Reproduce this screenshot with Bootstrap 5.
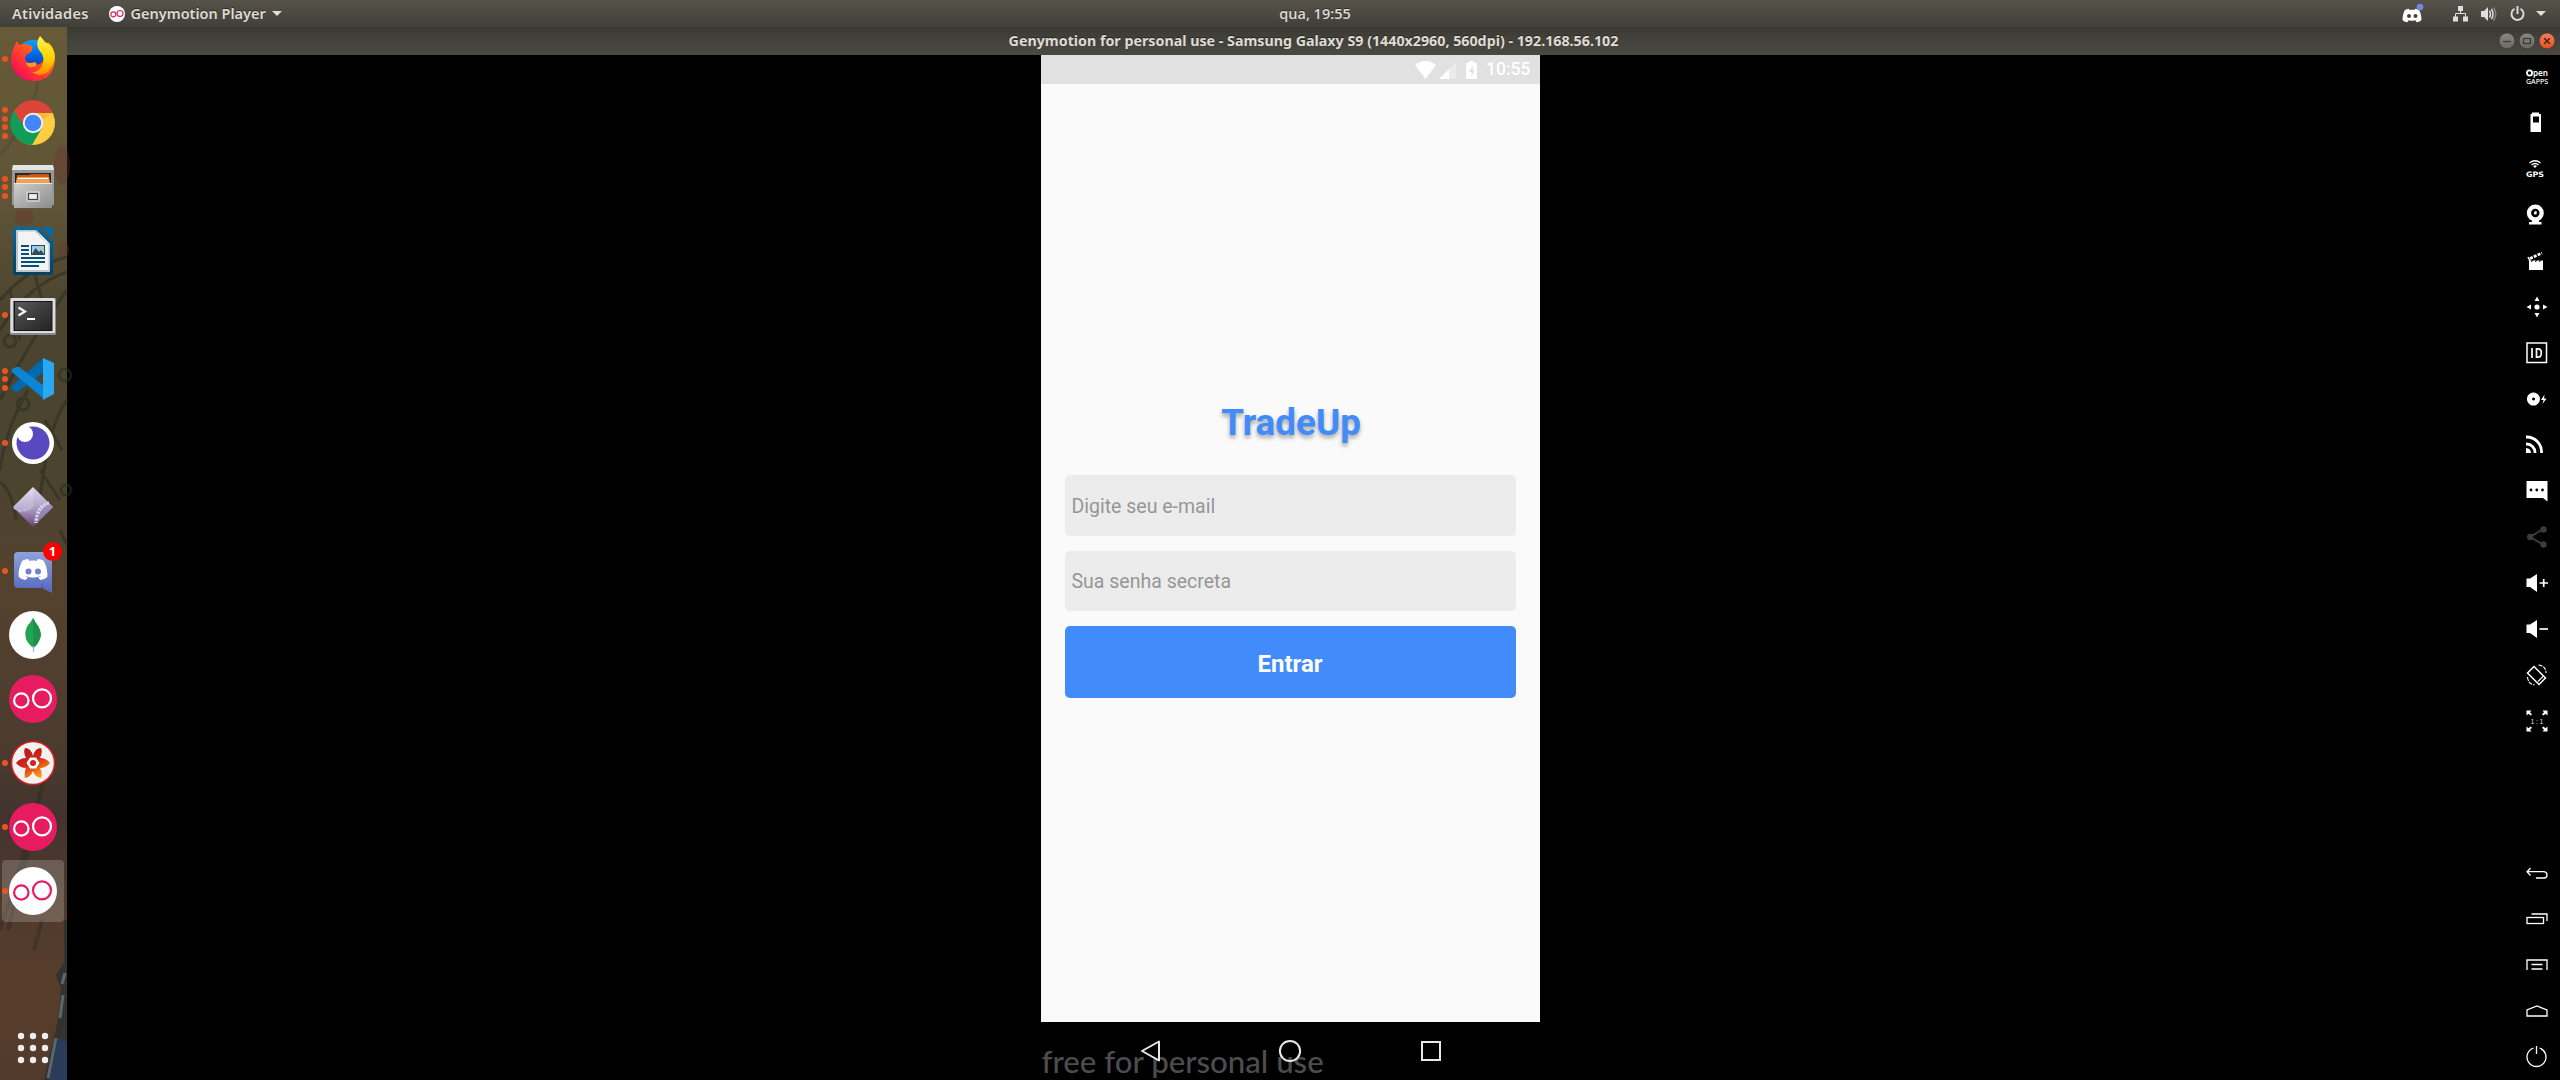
<!DOCTYPE html>
<html lang="pt-BR">
<head>
<meta charset="utf-8">
<meta name="viewport" content="width=device-width, initial-scale=1">
<title>Genymotion Player</title>
<link href="https://cdn.jsdelivr.net/npm/bootstrap@5.3.0/dist/css/bootstrap.min.css" rel="stylesheet">
<style>
html,body{height:100%}
body{background:#000;overflow:hidden;font-family:"Noto Sans",sans-serif}
svg{display:block;flex:none;overflow:visible}
.topbar{height:27px;background:linear-gradient(#57534a,#403f3a);color:#dfdbd2;font-size:14.5px;font-weight:600;line-height:27px;display:grid;grid-template-columns:1fr auto 1fr}
.topbar,.titlebar{text-shadow:0 -1px 0 rgba(0,0,0,.45)}
.activities{padding-left:12px;letter-spacing:.25px}
.appmenu{margin-left:20px;gap:6px}
.clock{padding-left:70px;font-family:"Open Sans",sans-serif}
.tray{padding-right:14px}
.tray .t-chat{margin-right:30px}
.tray .t-net,.tray .t-vol{margin-right:13px}
.tray .t-pow{margin-right:11px}
.titlebar{height:28px;background:linear-gradient(#3b3a35,#4b4943);color:#dfdbd2;font-size:14.25px;font-weight:700;line-height:28px;display:grid;grid-template-columns:68px 1fr 68px}
.winbtns{padding-right:5px}
.dock{width:67px;background:linear-gradient(#665a37 0%,#5f5436 17%,#4b442e 27%,#4b442f 43%,#54412e 54%,#4c3b2f 68%,#42342d 75%,#513b2d 84%,#573d2b 92%,#523b2c 100%);z-index:0}
.wallpaper{position:absolute;inset:0;z-index:-1}
.slot{height:64px;position:relative}
.slot.current::before{content:"";position:absolute;left:2px;top:1px;width:62px;height:62px;border-radius:4px;background:rgba(255,255,255,.19)}
.slot svg{position:relative}
.dots{position:absolute;left:2px;top:0;height:64px;width:6px;gap:2.5px;z-index:1}
.dots i{width:6px;height:6px;border-radius:50%;background:#e95420;flex:none}
.notif{position:absolute;left:43px;top:3px;width:19px;height:19px;border-radius:50%;background:#f00;color:#fff;font:700 13px/19px "Noto Sans",sans-serif;text-align:center}
.apps{height:64px}
.phone{width:499px;font-family:Roboto,sans-serif}
.statusbar{height:29px;background:#e1e1e1;color:#fff;font-size:17.5px;font-weight:500;padding-right:9px}
.s-wifi{margin-right:3px}
.s-cell{margin-right:10px}
.s-batt{margin-right:9px}
.app{background:#fafafa;padding:315px 24px 0}
.brand-name{font-size:36.8px;font-weight:700;line-height:44px;color:#428bfa;text-shadow:0 3px 4px rgba(0,0,0,.35);margin-bottom:30px;padding:2px 0 0 2px}
.field{height:60.500px;border:0;border-radius:5px;background:#ececec;padding:2px 7px 0;font-size:19.5px;color:#333;margin-bottom:15px}
.field::placeholder{color:#969696;opacity:1}
.field:focus{background:#ececec}
.enter{height:72px;border:0;border-radius:5px;background:#428bfa;font-size:24px;font-weight:700;padding:3px 0 0}
.navbuttons{height:58px;position:relative}
.watermark{position:absolute;left:1px;top:19px;font:500 31.2px/40px Lato,sans-serif;color:#4d4d4d;white-space:nowrap}
.navrow{position:relative;padding:18px 99px 0 98px}
.tools{width:47px;margin-top:-1px}
.tool{height:46px;color:#fff}
.tool svg{width:22px;height:22px}
</style>
</head>
<body class="d-flex flex-column">
<svg width="0" height="0" class="position-absolute">
<defs>
<linearGradient id="fxr" x1="0" y1="1" x2="1" y2="0"><stop offset="0" stop-color="#b5007f"/><stop offset=".25" stop-color="#ff1e45"/><stop offset=".6" stop-color="#ff5a1f"/><stop offset="1" stop-color="#ffc400"/></linearGradient>
<linearGradient id="fxy" x1="0" y1="0" x2="0" y2="1"><stop offset="0" stop-color="#fff44a"/><stop offset=".6" stop-color="#ffd000"/><stop offset="1" stop-color="#ff8a00"/></linearGradient>
<linearGradient id="fxb" x1="0" y1="0" x2="0" y2="1"><stop offset="0" stop-color="#0aa0ff"/><stop offset=".5" stop-color="#0060df"/><stop offset="1" stop-color="#45107a"/></linearGradient>
<linearGradient id="metal" x1="0" y1="0" x2="1" y2="1"><stop offset="0" stop-color="#cfcfcf"/><stop offset="1" stop-color="#8c8c8c"/></linearGradient>
<linearGradient id="term" x1="0" y1="0" x2="1" y2="1"><stop offset="0" stop-color="#5a5a5a"/><stop offset=".5" stop-color="#3c3c3c"/><stop offset="1" stop-color="#242424"/></linearGradient>
<linearGradient id="dia" x1="0" y1="0" x2="0" y2="1"><stop offset="0" stop-color="#dcd9ee"/><stop offset=".55" stop-color="#a99cc4"/><stop offset="1" stop-color="#6a3d78"/></linearGradient>
<linearGradient id="disc" x1="0" y1="0" x2="0" y2="1"><stop offset="0" stop-color="#8fa2dc"/><stop offset="1" stop-color="#5468bd"/></linearGradient>
<linearGradient id="doc" x1="0" y1="0" x2="0" y2="1"><stop offset="0" stop-color="#0369a3"/><stop offset="1" stop-color="#064066"/></linearGradient>
<linearGradient id="star" x1="0" y1="0" x2=".6" y2="1"><stop offset="0" stop-color="#a81217"/><stop offset=".55" stop-color="#d02a1e"/><stop offset="1" stop-color="#ff9a12"/></linearGradient>
<linearGradient id="wbtn" x1="0" y1="0" x2="0" y2="1"><stop offset="0" stop-color="#8a8880"/><stop offset="1" stop-color="#6a6862"/></linearGradient>
<linearGradient id="wcls" x1="0" y1="0" x2="0" y2="1"><stop offset="0" stop-color="#f58060"/><stop offset="1" stop-color="#e2501e"/></linearGradient>
<symbol id="clyde" viewBox="0 0 28 22"><path fill="currentColor" d="M9.500 1C7 1.200 4.800 2 3.500 3C1 7.500 0 13 .2 17.600C2 19.600 4.500 20.600 7.200 21L9 18.500C7.800 18.100 6.800 17.700 6 17C11 19.300 17 19.300 22 17C21.200 17.700 20.200 18.100 19 18.500L20.800 21C23.500 20.600 26 19.600 27.800 17.600C28 13 27 7.500 24.500 3C23.200 2 21 1.200 18.500 1L17.600 2.800C15 2.400 13 2.400 10.400 2.800Z"/></symbol>
</defs>
</svg>

<header class="topbar">
  <div class="d-flex align-items-center"><span class="activities">Atividades</span>
    <span class="appmenu d-flex align-items-center"><svg width="16" height="16" viewBox="0 0 48 48"><circle cx="24" cy="24" r="24" fill="#fff"/><g fill="none" stroke="#e61b60" stroke-width="3.500"><circle cx="13" cy="25" r="7.500"/><circle cx="33" cy="22.500" r="9"/></g></svg><span>Genymotion Player</span><svg width="10" height="5" viewBox="0 0 10 5"><path d="M0 0H10L5 5Z" fill="#ddd"/></svg></span></div>
  <div class="clock">qua, 19:55</div>
  <div class="tray d-flex justify-content-end align-items-center">
    <svg class="t-chat" width="21" height="20" viewBox="0 0 21 20"><svg x="0" y="4" width="20" height="15" color="#fff"><use href="#clyde"/></svg><circle cx="7" cy="12" r="2" fill="#45433e"/><circle cx="13.500" cy="12" r="2" fill="#45433e"/><circle cx="18" cy="3" r="3.300" fill="#7289da"/></svg>
    <svg class="t-net" width="15" height="16" viewBox="0 0 15 16"><path fill="#dedede" d="M5 0H10V5H5ZM0 10.500H5V15.500H0ZM10 10.500H15V15.500H10Z"/><path d="M7.500 5V8M2.500 11V7.500H12.500V11" fill="none" stroke="#dedede"/></svg>
    <svg class="t-vol" width="16" height="16" viewBox="0 0 16 16"><path d="M0 5H3L7 1V15L3 11H0Z" fill="#dedede"/><path d="M8.500 4.500Q10.500 8 8.500 11.500M10.500 3Q13.500 8 10.500 13" fill="none" stroke="#dedede" stroke-width="1.500"/><path d="M12.500 1.500Q17 8 12.500 14.500" fill="none" stroke="#85827a" stroke-width="1.500"/></svg>
    <svg class="t-pow" width="15" height="16" viewBox="0 0 15 16"><path d="M4.500 2.800A6 6 0 1 0 10.500 2.800M7.500 0V8" fill="none" stroke="#dedede" stroke-width="1.900"/></svg>
    <svg width="10" height="5" viewBox="0 0 10 5"><path d="M0 0H10L5 5Z" fill="#ddd"/></svg>
  </div>
</header>

<div class="d-flex flex-grow-1">
<nav class="dock position-relative d-flex flex-column">
  <svg class="wallpaper" width="67" height="1053" viewBox="0 27 67 1053">
    <g fill="#6d3034" opacity=".35"><ellipse cx="62" cy="165" rx="8" ry="20"/><ellipse cx="24" cy="217" rx="10" ry="8"/><ellipse cx="64" cy="250" rx="5" ry="8"/></g>
    <g fill="none" stroke="#2a2e24" stroke-width="3" opacity=".55"><path d="M38 80Q34 110 12 140L0 155" opacity=".3"/><path d="M67 257Q30 266 0 300"/><path d="M67 272Q28 285 0 330"/><path d="M10 290L20 340M35 275L50 330M67 290Q30 340 0 400"/><circle cx="10" cy="341" r="6"/><circle cx="23" cy="404" r="6"/><circle cx="65" cy="375" r="6"/><path d="M67 400Q45 430 38 520M28 390Q5 430 0 470M45 420L62 450M40 470L60 500"/><circle cx="66" cy="490" r="5"/><path d="M0 482Q12 490 16 520"/><path d="M60 530L67 545"/></g>
    <path d="M44 778Q30 840 0 930M28 850L8 930M42 920L34 950" fill="none" stroke="#27211f" stroke-width="4" opacity=".35"/>
    <path d="M67 920H64V962L56 975L61 988L58 1020L44 1080H67Z" fill="#29302f" opacity=".8"/>
    <path d="M67 1042L58 1038L49 1080H67Z" fill="#2b3c5a"/>
    <path d="M65 973L62 984M63 995L60 1018M56 1038L48 1078" fill="none" stroke="#59686a" stroke-width="3"/>
  </svg>
  <div class="slot"><div class="dots d-flex flex-column justify-content-center"><i></i></div>
    <svg width="66" height="64" viewBox="0 0 66 64"><circle cx="33" cy="30" r="17" fill="url(#fxb)"/><path d="M17 14L19 18Q25 16 29 18L33 20L31 25L26 28L25 32Q27 40 36 38Q41 37 43 34Q47 29 45 24L48 15Q56 22 55 33Q53 54 33 54Q12 53 11 32Q12 22 17 14Z" fill="url(#fxr)"/><path d="M40 9Q35 16 39 23Q46 30 42 39Q38 46 32 45Q39 51 48 45Q57 34 54 25Q51 17 45 15Q43 12 40 9Z" fill="url(#fxy)"/><path d="M26 35Q30 37 35 35L37 37Q35 41 29 40Q26 38 26 35Z" fill="#ff9a1f"/></svg></div>
  <div class="slot"><div class="dots d-flex flex-column justify-content-center"><i></i><i></i><i></i><i></i></div>
    <svg width="66" height="64" viewBox="0 0 66 64"><circle cx="33" cy="32" r="22" fill="#ffcd40"/><path d="M33 32L23 42 14 20A22 22 0 0 1 53 22H33Z" fill="#db4437"/><path d="M14 20L25 37 33 42 42 37 32 54A22 22 0 0 1 14 20Z" fill="#0f9d58"/><path d="M33 22H52.500L42 29Z" fill="#e3a82d" opacity=".5"/><circle cx="33" cy="32" r="10.200" fill="#f1f1f1"/><circle cx="33" cy="32" r="8.300" fill="#4285f4"/></svg></div>
  <div class="slot"><div class="dots d-flex flex-column justify-content-center"><i></i><i></i><i></i></div>
    <svg width="66" height="64" viewBox="0 0 66 64"><path d="M13 10H53L54 15V50H12V15Z" fill="#989898"/><path d="M13 10H53L54 15H12Z" fill="#e3e3e3"/><path d="M15 18H51V28H15Z" fill="#262626"/><path d="M17 20H29L31 19H49V28H16Z" fill="#cb571b"/><path d="M17 22H49L50 28H16Z" fill="#f0a055"/><path d="M18 23.500H48" stroke="#fff"/><path d="M14 28H52V53H14Z" fill="url(#metal)"/><path d="M14 28.500H52" stroke="#e8e8e8"/><rect x="26" y="36" width="14" height="11" rx="2" fill="#ccc"/><rect x="28.500" y="38.500" width="9" height="6" fill="#eee" stroke="#444" stroke-width="1.200"/></svg></div>
  <div class="slot">
    <svg width="66" height="64" viewBox="0 0 66 64"><path d="M15 8H38L53 23V54Q53 56 51 56H15Q13 56 13 54V10Q13 8 15 8Z" fill="url(#doc)"/><path d="M41 8H53V20Z" fill="#0768a5"/><path d="M16 11H36L50 25V53H16Z" fill="#bfc6ca"/><path d="M18 12.500H35L48.500 26V51H18Z" fill="#f3f3f3"/><path d="M36 11L50 25 46 23Z" fill="#fff"/><path d="M21 27H29M21 31H29M21 35H29M21 39H45M21 43H45M21 47H39" stroke="#075078" stroke-width="2"/><rect x="31.500" y="26.500" width="13" height="9" fill="#96cef5" stroke="#075078"/><path d="M32 35L35.500 29 39 33 41 31 44 35Z" fill="#444"/><circle cx="42" cy="28.500" r="1.500" fill="#ebc33b"/></svg></div>
  <div class="slot"><div class="dots d-flex flex-column justify-content-center"><i></i></div>
    <svg width="66" height="64" viewBox="0 0 66 64"><rect x="10" y="15" width="46" height="37" rx="1.500" fill="#8b898e"/><rect x="10.500" y="15" width="44.500" height="35" rx="1" fill="#dedbe0"/><rect x="13.500" y="18" width="39" height="30" fill="#151515"/><rect x="15" y="19" width="36.500" height="28" fill="url(#term)"/><path d="M18.500 24.500L25 28.500 18.500 32.500" fill="none" stroke="#f4f4f4" stroke-width="2.200"/><path d="M27 36H35" stroke="#fff" stroke-width="2"/></svg></div>
  <div class="slot"><div class="dots d-flex flex-column justify-content-center"><i></i><i></i><i></i></div>
    <svg width="66" height="64" viewBox="0 0 66 64"><path d="M43 11L12 39V42L16 45 19 44 44 25Z" fill="#0069b0"/><path d="M44 52L12 25V22L16 20 19 20 44 39Z" fill="#0a86d4"/><path d="M43 11L54 16V47L43 53Z" fill="#28a9f2"/></svg></div>
  <div class="slot"><div class="dots d-flex flex-column justify-content-center"><i></i></div>
    <svg width="66" height="64" viewBox="0 0 66 64"><circle cx="33" cy="32" r="21" fill="#fff"/><circle cx="33" cy="32" r="16.500" fill="#5849be"/><circle cx="25" cy="23" r="8" fill="#fff"/></svg></div>
  <div class="slot">
    <svg width="66" height="64" viewBox="0 0 66 64"><path d="M33 12L53 32 33 52 13 32Z" fill="url(#dia)"/><path d="M33 12V32L28 36 20 37 13 32Z" fill="#fff" opacity=".18"/><path d="M49 28Q37 31 36 48" fill="none" stroke="#d9d2ea" stroke-width="3.500" stroke-dasharray="2.500 1"/><path d="M50 29Q40 32 38 47L53 32Z" fill="#9485b8" opacity=".7"/><path d="M14 33L20 36 27 35 32 31 34 24 38 18" fill="none" stroke="#c5bddb" stroke-width="1.500" stroke-dasharray="3 2"/></svg></div>
  <div class="slot"><div class="dots d-flex flex-column justify-content-center"><i></i></div>
    <svg width="66" height="64" viewBox="0 0 66 64"><path d="M18 13H48Q52 13 52 17V54L42 49H18Q14 49 14 45V17Q14 13 18 13Z" fill="url(#disc)"/><path d="M42 45L43 49" stroke="#4053a8"/><svg x="18" y="19" width="30" height="23" color="#fff"><use href="#clyde"/></svg><circle cx="28.500" cy="32.500" r="3" fill="#6e82ca"/><circle cx="38" cy="32.500" r="3" fill="#6e82ca"/></svg><span class="notif">1</span></div>
  <div class="slot">
    <svg width="66" height="64" viewBox="0 0 66 64"><circle cx="33" cy="32" r="24" fill="#fff"/><path d="M33 15Q35 19 38 23Q43 31 39 38Q37 42 33.500 45Q28 41 26 36Q24 28 28 22Q31 19 33 15Z" fill="#23a455"/><path d="M33 15Q35 19 38 23Q43 31 39 38Q37 42 33.500 45Z" fill="#1c9148"/><path d="M33.500 43V49" stroke="#aab3b8" stroke-width="1.300"/></svg></div>
  <div class="slot">
    <svg width="66" height="64" viewBox="0 0 66 64"><circle cx="33" cy="32" r="24" fill="#e61b60"/><g fill="none" stroke="#fff" stroke-width="2.200"><circle cx="21.300" cy="33.500" r="7.200"/><circle cx="42" cy="31.300" r="9"/></g></svg></div>
  <div class="slot"><div class="dots d-flex flex-column justify-content-center"><i></i></div>
    <svg width="66" height="64" viewBox="0 0 66 64"><circle cx="33" cy="32" r="21.500" fill="#f2f2f2" stroke="#e01a1a" stroke-width="1.500"/><path d="M33 25Q31 17 25 17Q23 21 26 27Q20 27 16 32Q20 37 26 37Q24 42 25 47Q31 46 33 40Q35 46 41 47Q43 43 40 37Q46 37 50 32Q46 27 40 27Q43 21 41 17Q35 17 33 25Z" fill="url(#star)"/><path d="M30 26.500H36L39.500 32 36 37.500H30L26.500 32Z" fill="#fff"/><circle cx="33" cy="32" r="3" fill="#d42020"/></svg></div>
  <div class="slot"><div class="dots d-flex flex-column justify-content-center"><i></i></div>
    <svg width="66" height="64" viewBox="0 0 66 64"><circle cx="33" cy="32" r="24" fill="#e61b60"/><g fill="none" stroke="#fff" stroke-width="2.200"><circle cx="21.300" cy="33.500" r="7.200"/><circle cx="42" cy="31.300" r="9"/></g></svg></div>
  <div class="slot current"><div class="dots d-flex flex-column justify-content-center"><i></i></div>
    <svg width="66" height="64" viewBox="0 0 66 64"><circle cx="33" cy="32" r="24" fill="#fff"/><g fill="none" stroke="#e61b60" stroke-width="2.200"><circle cx="21.300" cy="33.500" r="7.200"/><circle cx="42" cy="31.300" r="9"/></g></svg></div>
  <div class="apps mt-auto"><svg width="66" height="64" viewBox="0 0 66 64"><g fill="#eee"><circle cx="21" cy="20" r="3.200"/><circle cx="33" cy="20" r="3.200"/><circle cx="45" cy="20" r="3.200"/><circle cx="21" cy="32" r="3.200"/><circle cx="33" cy="32" r="3.200"/><circle cx="45" cy="32" r="3.200"/><circle cx="21" cy="44" r="3.200"/><circle cx="33" cy="44" r="3.200"/><circle cx="45" cy="44" r="3.200"/></g></svg></div>
</nav>

<main class="flex-grow-1 d-flex flex-column">
  <div class="titlebar">
    <span></span>
    <div class="text-center">Genymotion for personal use - Samsung Galaxy S9 (1440x2960, 560dpi) - 192.168.56.102</div>
    <div class="winbtns d-flex align-items-center justify-content-end gap-1">
      <svg width="16" height="16" viewBox="0 0 16 16"><circle cx="8" cy="8" r="7.900" fill="url(#wbtn)" stroke="#33322e" stroke-width=".6"/><path d="M4 8.500H12" stroke="#3a3934" stroke-width="1.200"/></svg>
      <svg width="16" height="16" viewBox="0 0 16 16"><circle cx="8" cy="8" r="7.900" fill="url(#wbtn)" stroke="#33322e" stroke-width=".6"/><rect x="4.500" y="5.500" width="7" height="5" fill="none" stroke="#3a3934" stroke-width="1.200"/></svg>
      <svg width="16" height="16" viewBox="0 0 16 16"><circle cx="8" cy="8" r="7.900" fill="url(#wcls)" stroke="#33322e" stroke-width=".6"/><path d="M5.200 5.200L10.800 10.800M10.800 5.200L5.200 10.800" stroke="#45200e" stroke-width="1.400"/></svg>
    </div>
  </div>
  <div class="d-flex flex-grow-1">
    <div class="flex-grow-1 d-flex justify-content-center">
      <section class="phone d-flex flex-column">
        <div class="statusbar d-flex justify-content-end align-items-center">
          <svg class="s-wifi" width="21" height="18" viewBox="0 0 21 18"><path d="M0 4Q10.500-4 21 4L10.500 18Z" fill="#fff"/></svg>
          <svg class="s-cell" width="17" height="18" viewBox="0 0 17 18"><path d="M17 1V18H0Z" fill="#ececec"/><path d="M10 8V18H0Z" fill="#fff"/></svg>
          <svg class="s-batt" width="11" height="18" viewBox="0 0 11 18"><path d="M3 0H8V2H11V18H0V2H3Z" fill="#fff"/><path d="M7 4L3 11H5.500V16L8.500 9H6.500Z" fill="#e1e1e1"/></svg>
          <span>10:55</span>
        </div>
        <form class="app flex-grow-1" onsubmit="return false">
          <h1 class="brand-name text-center">TradeUp</h1>
          <input class="field form-control shadow-none" type="email" placeholder="Digite seu e-mail">
          <input class="field form-control shadow-none" type="password" placeholder="Sua senha secreta">
          <button class="enter btn btn-primary w-100" type="submit">Entrar</button>
        </form>
        <div class="navbuttons">
          <span class="watermark">free for personal use</span>
          <div class="navrow d-flex justify-content-between">
            <svg width="22" height="22" viewBox="0 0 22 22"><path d="M20 1.500V20.500L3 11Z" fill="none" stroke="#e8e8e8" stroke-width="2" stroke-linejoin="round"/></svg>
            <svg width="23" height="22" viewBox="0 0 23 22"><circle cx="11" cy="11" r="10.100" fill="none" stroke="#e8e8e8" stroke-width="2"/></svg>
            <svg width="20" height="22" viewBox="0 0 20 22"><rect x="1" y="2" width="18" height="18" fill="none" stroke="#e8e8e8" stroke-width="2"/></svg>
          </div>
        </div>
      </section>
    </div>
    <aside class="tools d-flex flex-column">
      <div class="tool d-flex align-items-center justify-content-center"><svg viewBox="0 0 22 22" fill="#fff" font-family="Noto Sans" font-weight="600"><circle cx="3.500" cy="7" r="2.600" fill="none" stroke="#fff" stroke-width="1.800"/><text x="7" y="10" font-size="8.500" textLength="15" lengthAdjust="spacingAndGlyphs">pen</text><text x="0" y="18" font-size="7" font-weight="500" textLength="22" lengthAdjust="spacingAndGlyphs">GAPPS</text></svg></div>
      <div class="tool d-flex align-items-center justify-content-center"><svg viewBox="0 0 22 22"><path fill="#fff" fill-rule="evenodd" d="M6 .5H13V2H15V20H4.500V2H6ZM7 4.500H13V10.500H7Z"/></svg></div>
      <div class="tool d-flex align-items-center justify-content-center"><svg viewBox="0 0 22 22"><g fill="none" stroke="#fff" stroke-width="1.300"><path d="M3.500 5Q9 .5 14.500 5M5.500 7Q9 4 12.500 7"/></g><path d="M7 8L9 10 11 8Q9 6.500 7 8Z" fill="#fff"/><text x="0" y="18.500" font-family="DejaVu Sans" font-weight="700" font-size="7.500" fill="#fff" textLength="18" lengthAdjust="spacingAndGlyphs">GPS</text></svg></div>
      <div class="tool d-flex align-items-center justify-content-center"><svg viewBox="0 0 22 22"><circle cx="9.300" cy="9" r="8.500" fill="#fff"/><circle cx="9.300" cy="9" r="4.200" fill="#000"/><circle cx="9.300" cy="9" r="1.500" fill="#fff"/><path d="M9.300 9V6.500L11 8Z" fill="#fff"/><path d="M6 16H13V18H15.500V20.500H3V18H6Z" fill="#fff"/></svg></div>
      <div class="tool d-flex align-items-center justify-content-center"><svg viewBox="0 0 22 22"><path d="M3 10.500H17V20H3Z" fill="#fff"/><path d="M4 8.500L16 3" stroke="#fff" stroke-width="2.600" stroke-dasharray="3 1.200"/><path d="M2 7L4 11" stroke="#fff" stroke-width="1.500"/><path d="M5 11.500L7 10.500M9 11.500L11 10.500M13 11.500L15 10.500" stroke="#000"/></svg></div>
      <div class="tool d-flex align-items-center justify-content-center"><svg viewBox="0 0 22 22" fill="#fff"><circle cx="11" cy="11" r="2.600"/><path d="M11 .5L13.500 5H8.500ZM11 21.500L13.500 17H8.500ZM.5 11L5 8.500V13.500ZM21.500 11L17 8.500V13.500Z"/></svg></div>
      <div class="tool d-flex align-items-center justify-content-center"><svg viewBox="0 0 22 22" fill="none" stroke="#fff"><rect x="1" y="1" width="19.500" height="19.500" stroke-width="1.500"/><path d="M6 6V16M10.500 6.800V15.200H12Q15.300 15.200 15.300 11T12 6.800Z" stroke-width="1.700"/></svg></div>
      <div class="tool d-flex align-items-center justify-content-center"><svg viewBox="0 0 22 22"><path fill="#fff" fill-rule="evenodd" d="M7.500 4.500A6.500 6.500 0 1 1 7.400 4.500ZM7.500 9.500A1.500 1.500 0 1 0 7.600 9.500Z"/><path d="M18.500 6.500L15 12H17.500L16.500 16L20.500 10.500H18Z" fill="#fff"/></svg></div>
      <div class="tool d-flex align-items-center justify-content-center"><svg viewBox="0 0 22 22" fill="none" stroke="#fff" stroke-width="2.800"><path d="M0 3A15 15 0 0 1 15.500 19M0 10A8.500 8.500 0 0 1 9 19"/><path d="M0 14Q5 14.500 5 19H0Z" fill="#fff" stroke="none"/></svg></div>
      <div class="tool d-flex align-items-center justify-content-center"><svg viewBox="0 0 22 22"><path d="M.5 1H21.500V21.500L17 18H.5Z" fill="#fff"/><g fill="#000"><circle cx="5" cy="10" r="1.400"/><circle cx="10.800" cy="10" r="1.400"/><circle cx="16.500" cy="10" r="1.400"/></g></svg></div>
      <div class="tool d-flex align-items-center justify-content-center"><svg viewBox="0 0 22 22"><path d="M17 3L4 11 17 18.500" fill="none" stroke="#3b3b39" stroke-width="2"/><g fill="#3b3b39"><circle cx="17.500" cy="3.500" r="3.200"/><circle cx="4.200" cy="11" r="3.200"/><circle cx="17.500" cy="18.500" r="3.200"/></g></svg></div>
      <div class="tool d-flex align-items-center justify-content-center"><svg viewBox="0 0 22 22"><path d="M.5 6.500H4L11 2V20L4 15H.5Z" fill="#fff"/><path d="M13.500 11H22M17.700 7V15" stroke="#fff" stroke-width="1.700"/></svg></div>
      <div class="tool d-flex align-items-center justify-content-center"><svg viewBox="0 0 22 22"><path d="M.5 6.500H4L11 2V20L4 15H.5Z" fill="#fff"/><path d="M13.500 11H22" stroke="#fff" stroke-width="1.700"/></svg></div>
      <div class="tool d-flex align-items-center justify-content-center"><svg viewBox="0 0 22 22" fill="none" stroke="#fff"><path d="M8 2.500L1.500 9 13 20.500 19.500 14Z" stroke-width="1.500"/><path d="M12.500 1Q20 2 20 9M1.500 13Q2 20 8.500 20.800" stroke-width="1.100" stroke-dasharray="4 1"/><path d="M12 17.500L17 12.500" stroke-width="1.200"/></svg></div>
      <div class="tool d-flex align-items-center justify-content-center"><svg viewBox="0 0 22 22"><path fill="#fff" d="M.5 .5H5.500L4 2.300 6 4.200 4.500 5.500 2.500 3.700.5 5.500ZM21.500 .5H16.500L18 2.300 16 4.200 17.500 5.500 19.500 3.700 21.500 5.500ZM.5 21.500H5.500L4 19.700 6 17.800 4.500 16.500 2.500 18.300.5 16.500ZM21.500 21.500H16.500L18 19.700 16 17.800 17.500 16.500 19.500 18.300 21.500 16.500Z"/><text x="4.500" y="13.500" font-family="Liberation Sans" font-size="7" textLength="13" fill="#ddd">1:1</text></svg></div>
      <div class="mt-auto">
      <div class="tool d-flex align-items-center justify-content-center"><svg viewBox="0 0 22 22" fill="none" stroke="#fff" stroke-width="1.300"><path d="M4.500 6L1 9.700 4.500 13.500M1 9.700H18Q21 10 21 13T18 16H10"/></svg></div>
      <div class="tool d-flex align-items-center justify-content-center"><svg viewBox="0 0 22 22" fill="none" stroke="#fff" stroke-width="1.300"><rect x="1" y="9.500" width="16.500" height="6"/><path d="M5.500 6H21V13"/></svg></div>
      <div class="tool d-flex align-items-center justify-content-center"><svg viewBox="0 0 22 22" fill="none" stroke="#fff" stroke-width="1.300"><path d="M1 16V6H21V16"/><path d="M5.500 10.500H16.500M5.500 15H16.500"/></svg></div>
      <div class="tool d-flex align-items-center justify-content-center"><svg viewBox="0 0 22 22" fill="none" stroke="#fff" stroke-width="1.300"><path d="M1 16V10L11 6 21 10V16Z"/></svg></div>
      <div class="tool d-flex align-items-center justify-content-center"><svg viewBox="0 0 22 22" fill="none" stroke="#fff" stroke-width="1.300"><path d="M7.500 2A9.500 9.500 0 1 0 13.500 2M10.500 0V8"/></svg></div>
      </div>
    </aside>
  </div>
</main>
</div>
<script src="https://cdn.jsdelivr.net/npm/bootstrap@5.3.0/dist/js/bootstrap.bundle.min.js"></script>
</body>
</html>
